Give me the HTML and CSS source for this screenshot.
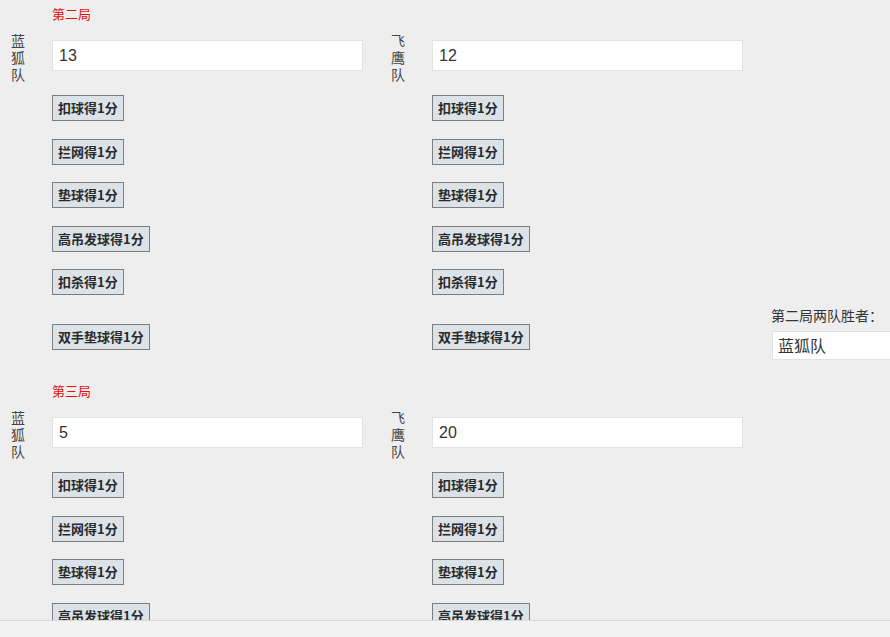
FILE: index.html
```html
<!DOCTYPE html>
<html lang="zh">
<head>
<meta charset="utf-8">
<title>比赛计分</title>
<link rel="stylesheet" href="styles.css">
</head>
<body>
<div class="viewport">
  <section class="round">
    <div class="round-title">第二局</div>
    <div class="round-body">
      <div class="team">
        <div class="team-head">
          <div class="team-name">蓝狐队</div>
          <input class="score" type="text" value="13">
        </div>
        <div class="actions">
          <button class="btn">扣球得1分</button>
          <button class="btn">拦网得1分</button>
          <button class="btn">垫球得1分</button>
          <button class="btn">高吊发球得1分</button>
          <button class="btn">扣杀得1分</button>
          <button class="btn btn-last">双手垫球得1分</button>
        </div>
      </div>
      <div class="team">
        <div class="team-head">
          <div class="team-name">飞鹰队</div>
          <input class="score" type="text" value="12">
        </div>
        <div class="actions">
          <button class="btn">扣球得1分</button>
          <button class="btn">拦网得1分</button>
          <button class="btn">垫球得1分</button>
          <button class="btn">高吊发球得1分</button>
          <button class="btn">扣杀得1分</button>
          <button class="btn btn-last">双手垫球得1分</button>
        </div>
      </div>
      <div class="winner">
        <div class="winner-label">第二局两队胜者：</div>
        <input class="winner-input" type="text" value="蓝狐队">
      </div>
    </div>
  </section>
  <section class="round">
    <div class="round-title">第三局</div>
    <div class="round-body">
      <div class="team">
        <div class="team-head">
          <div class="team-name">蓝狐队</div>
          <input class="score" type="text" value="5">
        </div>
        <div class="actions">
          <button class="btn">扣球得1分</button>
          <button class="btn">拦网得1分</button>
          <button class="btn">垫球得1分</button>
          <button class="btn">高吊发球得1分</button>
          <button class="btn">扣杀得1分</button>
          <button class="btn btn-last">双手垫球得1分</button>
        </div>
      </div>
      <div class="team">
        <div class="team-head">
          <div class="team-name">飞鹰队</div>
          <input class="score" type="text" value="20">
        </div>
        <div class="actions">
          <button class="btn">扣球得1分</button>
          <button class="btn">拦网得1分</button>
          <button class="btn">垫球得1分</button>
          <button class="btn">高吊发球得1分</button>
          <button class="btn">扣杀得1分</button>
          <button class="btn btn-last">双手垫球得1分</button>
        </div>
      </div>
    </div>
  </section>
</div>
<div class="scrollbar"></div>
</body>
</html>
```

FILE: styles.css
```css
* { box-sizing: border-box; }
html, body {
  margin: 0;
  padding: 0;
  background: #eeeeee;
  overflow: hidden;
  font-family: "Liberation Sans", "Noto Sans CJK SC", sans-serif;
  color: #333;
}
.viewport {
  height: 620px;
  overflow: hidden;
}
.round {
  height: 377px;
  padding-top: 6px;
}
.round-title {
  padding-left: 52px;
  font-size: 13px;
  line-height: 16px;
  color: #e3120f;
  font-family: "Noto Sans CJK SC", sans-serif;
}
.round-body {
  display: flex;
  align-items: flex-start;
  margin-top: 10px;
}
.team {
  width: 380px;
  flex: none;
  padding-left: 11px;
}
.team-head {
  display: flex;
  align-items: flex-start;
}
.team-name {
  width: 41px;
  flex: none;
  padding-right: 27px;
  font-size: 14px;
  line-height: 17px;
  color: #444;
  font-family: "Noto Sans CJK SC", sans-serif;
  font-weight: 400;
}
.score {
  width: 311px;
  height: 31px;
  margin-top: 8px;
  border: 1px solid #e2e2e2;
  background: #fff;
  padding: 0 6px;
  font-size: 16px;
  font-family: "Liberation Sans", "Noto Sans CJK SC", sans-serif;
  color: #333;
  outline: none;
}
.actions {
  display: flex;
  flex-direction: column;
  align-items: flex-start;
  gap: 17.5px;
  margin-top: 12px;
  padding-left: 41px;
}
.btn {
  height: 26px;
  padding: 0 5px;
  border: 1px solid #7d7d7d;
  background: #dce3e8;
  font-family: "Noto Sans CJK SC", sans-serif;
  font-weight: 700;
  font-size: 13px;
  line-height: 24px;
  color: #2a2a2a;
  border-radius: 0;
}
.btn-last {
  margin-top: 11px;
}
.winner {
  flex: none;
  align-self: flex-end;
  padding-left: 11px;
  margin-bottom: -10px;
}
.winner-label {
  font-size: 14px;
  line-height: 18px;
  color: #333;
  font-family: "Noto Sans CJK SC", sans-serif;
  margin-bottom: 7px;
}
.winner-input {
  width: 200px;
  height: 29px;
  margin-left: 1px;
  border: 1px solid #e2e2e2;
  background: #fff;
  padding: 0 5px;
  font-size: 16px;
  font-family: "Noto Sans CJK SC", sans-serif;
  color: #333;
  outline: none;
}
.scrollbar {
  height: 17px;
  border-top: 1px solid #d9d9d9;
  background: #f2f2f2;
}
```
